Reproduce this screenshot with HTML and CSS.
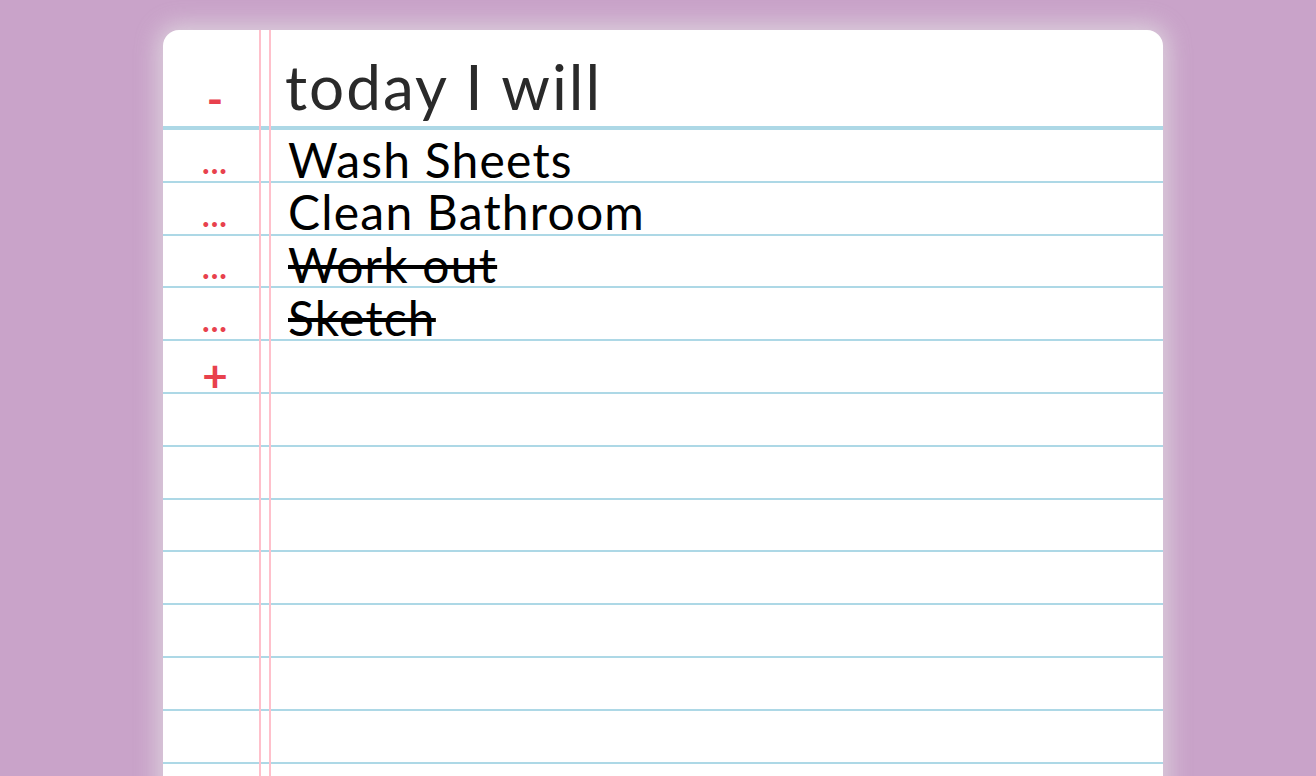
FILE: index.html
```
<!DOCTYPE html>
<html lang="en">
<head>
<meta charset="utf-8">
<title>today I will</title>
<link rel="stylesheet" href="styles.css">
</head>
<body>
<main class="sheet">
  <div class="row head">
    <span class="mark minus">-</span>
    <h1 class="title">today I will</h1>
  </div>
  <div class="row"><span class="mark dots">...</span><span class="item">Wash Sheets</span></div>
  <div class="row"><span class="mark dots">...</span><span class="item">Clean Bathroom</span></div>
  <div class="row"><span class="mark dots">...</span><span class="item done">Work out</span></div>
  <div class="row"><span class="mark dots">...</span><span class="item done">Sketch</span></div>
  <div class="row"><span class="mark plus">+</span><span class="item"></span></div>
  <div class="row"><span class="mark"></span><span class="item"></span></div>
  <div class="row"><span class="mark"></span><span class="item"></span></div>
  <div class="row"><span class="mark"></span><span class="item"></span></div>
  <div class="row"><span class="mark"></span><span class="item"></span></div>
  <div class="row"><span class="mark"></span><span class="item"></span></div>
  <div class="row"><span class="mark"></span><span class="item"></span></div>
  <div class="row"><span class="mark"></span><span class="item"></span></div>
  <div class="row"><span class="mark"></span><span class="item"></span></div>
</main>
</body>
</html>
```
FILE: styles.css
```
html, body {
  margin: 0;
  padding: 0;
}
body {
  background: #c9a3c9;
  font-family: "Lato", "Open Sans", sans-serif;
  height: 776px;
  overflow: hidden;
  padding: 30px 0 0 10px;
  box-sizing: border-box;
}
.sheet {
  position: relative;
  width: 1000px;
  margin: 0 auto;
  background: #fff;
  border-radius: 16px 16px 0 0;
  box-shadow: 0 0 22px 6px rgba(225, 222, 225, 0.75);
  padding-bottom: 40px;
}
.sheet::before,
.sheet::after {
  content: "";
  position: absolute;
  top: 0;
  bottom: 0;
  width: 2px;
  background: #ffc0cb;
}
.sheet::before { left: 96px; }
.sheet::after { left: 106px; }
.row {
  display: grid;
  grid-template-columns: 104px 1fr;
  align-items: end;
  height: 52.8px;
  box-sizing: border-box;
  border-bottom: 2px solid #add8e6;
}
.row.head {
  height: 100px;
  border-bottom: 4px solid #add8e6;
}
.mark {
  color: #e8414d;
  text-align: center;
  line-height: 1;
}
.title {
  margin: 0;
  padding-left: 18px;
  font-weight: 400;
  font-size: 62px;
  letter-spacing: 2px;
  line-height: 1;
  color: #2a2a2a;
  padding-bottom: 9px;
}
.item {
  padding-left: 21px;
  font-size: 48px;
  letter-spacing: 1.2px;
  line-height: 0.9;
  color: #000;
}
.done {
  text-decoration: line-through;
  text-decoration-thickness: 4px;
}
.minus { font-size: 44px; font-weight: 700; padding-bottom: 6px; }
.dots { font-size: 32px; padding-bottom: 3px; letter-spacing: 1px; font-weight: 700; }
.plus { font-size: 44px; font-weight: 700; line-height: 0.75; }
```
